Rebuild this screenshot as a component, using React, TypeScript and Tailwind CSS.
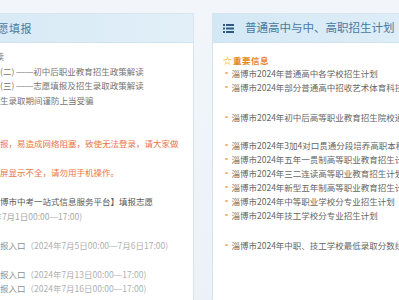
import React from 'react';

// Left panel lines: prefix is cut off by the viewport, rest is visible
type Line = { pre?: string; text?: string; tail?: string; tone?: 'gray' | 'warn' | 'dark' | 'light' | 'entry'; shift?: boolean };

const leftLines: Line[] = [
  { pre: '招生政策解读', tone: 'gray', shift: true },
  { pre: '招生政策解读', text: '(二) ——初中后职业教育招生政策解读', tone: 'gray' },
  { pre: '招生政策解读', text: '(三) ——志愿填报及招生录取政策解读', tone: 'gray' },
  { pre: '温馨提示：招', text: '生录取期间谨防上当受骗', tone: 'gray' },
  {},
  {},
  { pre: '避免同时段填', text: '报，易造成网络阻塞，致使无法登录，请大家做', tone: 'warn' },
  {},
  { pre: '手机访问时小', text: '屏显示不全，请勿用手机操作。', tone: 'warn' },
  {},
  { pre: '考生登录【淄', text: '博市中考一站式信息服务平台】填报志愿', tone: 'dark' },
  { pre: '时间（2024年', text: '7月1日00:00—17:00)', tone: 'light' },
  {},
  { pre: '第一批志愿填', text: '报入口', tail: '（2024年7月5日00:00—7月6日17:00)', tone: 'entry' },
  {},
  { pre: '第二批志愿填', text: '报入口', tail: '（2024年7月13日00:00—17:00)', tone: 'entry' },
  { pre: '第三批志愿填', text: '报入口', tail: '（2024年7月16日00:00—17:00)', tone: 'entry' },
];

const toneClass = {
  gray: 'text-[#737373]',
  warn: 'text-[#ec7446]',
  dark: 'text-[#5a5a5a]',
  light: 'text-[#a8a8a8]',
  entry: 'text-[#8f8f8f]',
};

const groups: string[][] = [
  ['淄博市2024年普通高中各学校招生计划', '淄博市2024年部分普通高中招收艺术体育科技特长生计划'],
  ['淄博市2024年初中后高等职业教育招生院校通知'],
  [
    '淄博市2024年3加4对口贯通分段培养高职本科招生计划',
    '淄博市2024年五年一贯制高等职业教育招生计划',
    '淄博市2024年三二连读高等职业教育招生计划',
    '淄博市2024年新型五年制高等职业教育招生计划',
    '淄博市2024年中等职业学校分专业招生计划',
    '淄博市2024年技工学校分专业招生计划',
  ],
  ['淄博市2024年中职、技工学校最低录取分数线'],
];

const groupGap = ['mt-0', 'mt-[16px]', 'mt-[14px]', 'mt-[16px]'];

// em dashes set in Liberation Sans so each one is a full em wide
function withDash(s?: string) {
  if (!s) return null;
  return s.split('—').map((part, i) => (
    <React.Fragment key={i}>
      {i > 0 && <span className="font-['Liberation_Sans',sans-serif]">—</span>}
      {part}
    </React.Fragment>
  ));
}

function ListIcon() {
  return (
    <svg width="11" height="9" viewBox="0 0 11 9" className="shrink-0">
      <rect x="0" y="0" width="2" height="2" fill="#2c5a82" />
      <rect x="3" y="0" width="8" height="2" fill="#2c5a82" />
      <rect x="0" y="3.5" width="2" height="2" fill="#2c5a82" />
      <rect x="3" y="3.5" width="8" height="2" fill="#2c5a82" />
      <rect x="0" y="7" width="2" height="2" fill="#2c5a82" />
      <rect x="3" y="7" width="8" height="2" fill="#2c5a82" />
    </svg>
  );
}

export default function App() {
  return (
    <div className="w-[399px] h-[300px] overflow-hidden bg-gradient-to-b from-[#f2f6fa] to-[#eaf2f8] font-['Noto_Sans_CJK_SC',sans-serif]">
      <div className="flex gap-[18px] pt-[13px]">
        {/* 志愿填报 */}
        <section className="w-[284px] h-[300px] -ml-[90px] shrink-0 bg-white border border-[#d6e5f0]">
          <header className="h-[29px] flex items-center pl-[75px] bg-gradient-to-r from-[#d3e8f5] to-[#e2eff8] border-b border-[#cfe2ef]">
            <h2 className="text-[11px] text-[#4a79a0] tracking-[0.5px]">志愿填报</h2>
          </header>
          <div className="pt-[6px] pl-[38px] text-[8.5px] leading-[14.5px] whitespace-nowrap">
            {leftLines.map((l, i) => (
              <p key={i} className={`h-[14.5px] ${l.shift ? 'pl-[4px]' : ''} ${l.tone ? toneClass[l.tone] : ''}`}>
                {l.pre}
                {withDash(l.text)}
                {l.tail && <span className="text-[#b0b0b0]">{withDash(l.tail)}</span>}
              </p>
            ))}
          </div>
        </section>

        {/* 普通高中与中、高职招生计划 */}
        <section className="w-[260px] h-[300px] shrink-0 bg-white border border-[#d6e5f0]">
          <header className="h-[29px] flex items-center gap-[11px] pl-[10px] bg-gradient-to-r from-[#d3e8f5] to-[#e2eff8] border-b border-[#cfe2ef]">
            <ListIcon />
            <h2 className="text-[11.5px] text-[#4a79a0] whitespace-nowrap">普通高中与中、高职招生计划</h2>
          </header>
          <div className="pt-[11px] pl-[10px] text-[8.5px] leading-[14px] whitespace-nowrap">
            <div className="flex items-center gap-[1px] h-[12px] text-[#e8841f] font-bold">
              <span className="text-[9px] leading-none text-[#f5b800]">☆</span>
              <span className="tracking-[0.5px]">重要信息</span>
            </div>
            {groups.map((g, gi) => (
              <ul key={gi} className={groupGap[gi]}>
                {g.map((t) => (
                  <li key={t} className="flex items-center h-[14px] text-[#666666]">
                    <span className="w-[2.5px] h-[2.5px] rounded-full bg-[#f2b46c] ml-[2px] mr-[4px] shrink-0" />
                    {t}
                  </li>
                ))}
              </ul>
            ))}
          </div>
        </section>
      </div>
    </div>
  );
}
